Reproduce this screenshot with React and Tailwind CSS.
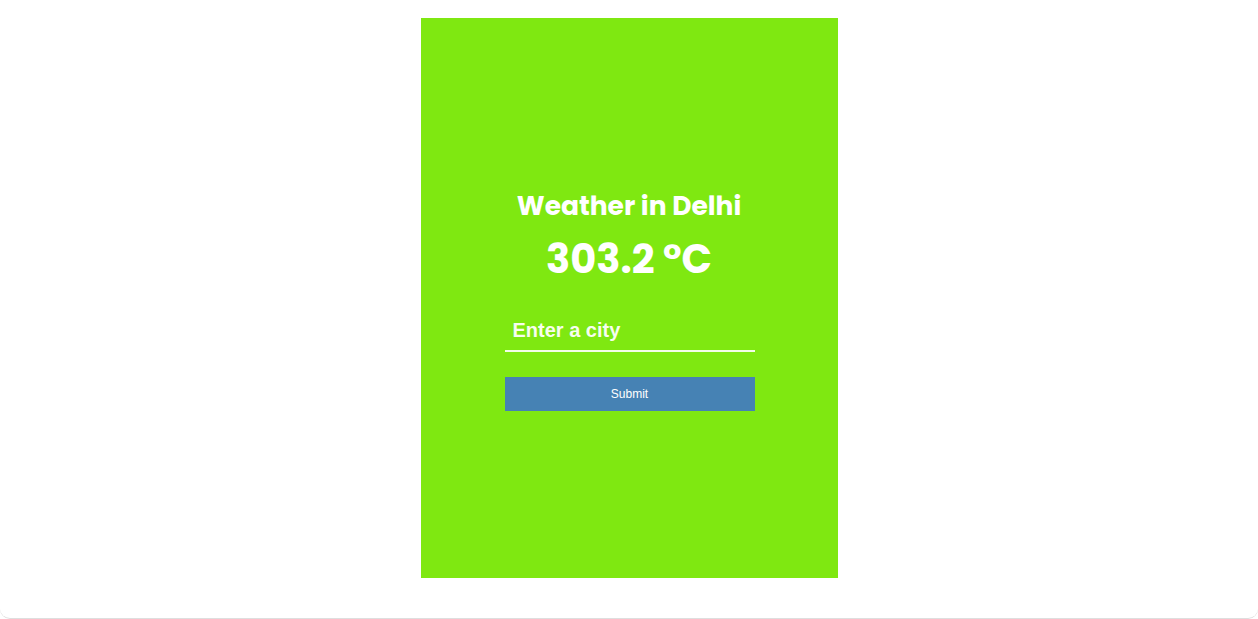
import React from "react";

export default function App() {
  const [city, setCity] = React.useState("");

  return (
    <div className="min-h-[619px] bg-white border-b border-[#dedede] rounded-b-[10px] font-['Liberation_Sans',Arial,sans-serif]">
      <div className="pt-[18px]">
        <div className="mx-auto flex h-[560px] w-[417px] flex-col items-center justify-center bg-[#7fe811] pt-[4px]">
          <h1 className="text-[26.5px] font-bold leading-[34px] text-white font-['Poppins','Inter',sans-serif]">
            Weather in Delhi
          </h1>
          <div className="mt-[11px] text-[40px] font-bold leading-[50px] text-white font-['Poppins','Inter',sans-serif]">
            303.2 °C
          </div>
          <form
            className="mt-[26px] ml-[1px] flex w-[250px] flex-col"
            onSubmit={(event) => event.preventDefault()}
          >
            <input
              type="text"
              value={city}
              onChange={(event) => setCity(event.target.value)}
              placeholder="Enter a city"
              className="h-[42px] w-full border-b-2 border-white/90 bg-transparent px-[8px] text-[20px] font-bold text-white outline-none placeholder:text-white/95"
            />
            <button
              type="submit"
              className="mt-[25px] h-[34px] w-full bg-[#4682b4] text-[12px] text-white"
            >
              Submit
            </button>
          </form>
        </div>
      </div>
    </div>
  );
}
